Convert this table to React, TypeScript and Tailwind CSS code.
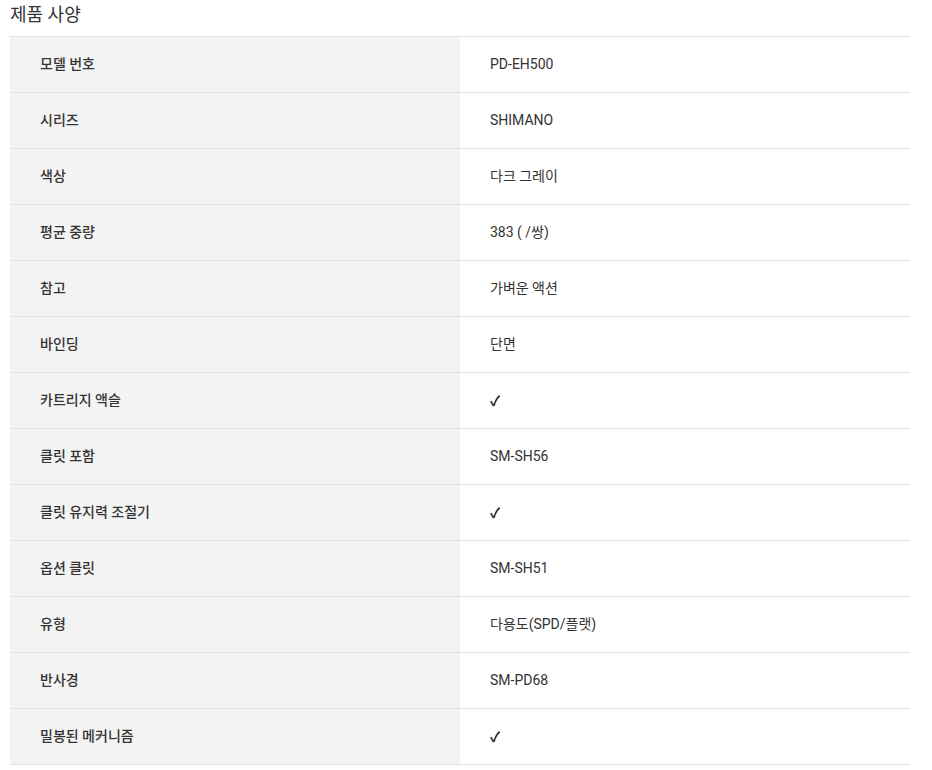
const specs: [string, string][] = [
  ['모델 번호', 'PD-EH500'],
  ['시리즈', 'SHIMANO'],
  ['색상', '다크 그레이'],
  ['평균 중량', '383 ( /쌍)'],
  ['참고', '가벼운 액션'],
  ['바인딩', '단면'],
  ['카트리지 액슬', '✓'],
  ['클릿 포함', 'SM-SH56'],
  ['클릿 유지력 조절기', '✓'],
  ['옵션 클릿', 'SM-SH51'],
  ['유형', '다용도(SPD/플랫)'],
  ['반사경', 'SM-PD68'],
  ['밀봉된 메커니즘', '✓'],
];

export default function App() {
  return (
    <div
      className="w-[932px] h-[770px] bg-white px-[10px] text-[#333]"
      style={{ fontFamily: 'Roboto, "Noto Sans CJK KR", sans-serif' }}
    >
      <h2 className="h-[36px] text-[18px] leading-[30px] font-normal text-[#333]">제품 사양</h2>
      <div className="w-[900px] border-t border-[#e3e3e3]">
        {specs.map(([label, value]) => (
          <div key={label} className="flex h-[56px] border-b border-[#e3e3e3]">
            <div className="w-[450px] bg-[#f3f3f3] pl-[30px] flex items-center text-[14px] font-medium text-[#333]">
              {label}
            </div>
            <div className="flex-1 pl-[30px] flex items-center text-[14px] text-[#333]">
              {value === '✓' ? (
                <span className="font-['Noto_Sans_CJK_KR'] font-bold text-[14px] text-[#222]">✓</span>
              ) : (
                value
              )}
            </div>
          </div>
        ))}
      </div>
    </div>
  );
}
